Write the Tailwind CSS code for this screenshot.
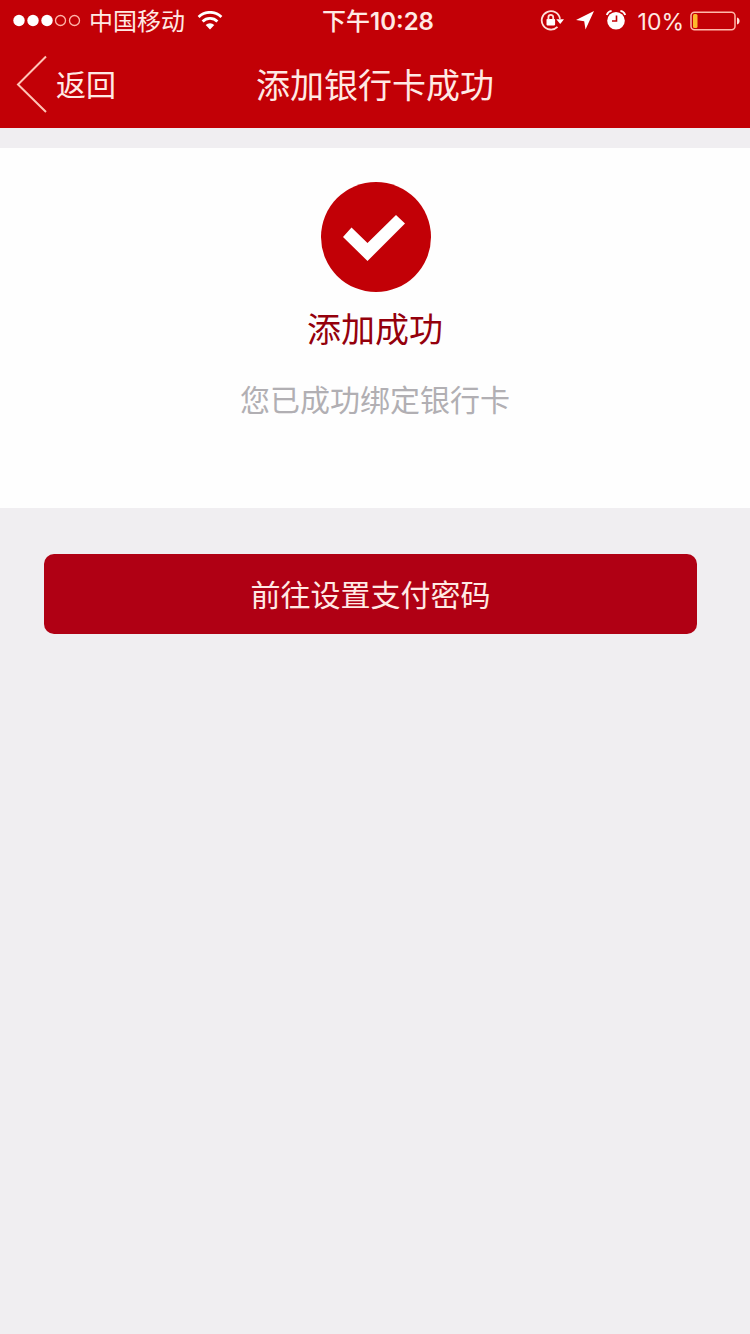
<!DOCTYPE html>
<html lang="zh-CN">
  <head>
    <meta charset="UTF-8" />
    <meta name="viewport" content="width=device-width, initial-scale=1.0" />
    <title>添加银行卡成功</title>
    <script src="https://cdn.jsdelivr.net/npm/@tailwindcss/browser@4"></script>
  </head>
  <body class="min-h-screen bg-[#f0eef1] font-['Inter','Noto_Sans_CJK_SC',sans-serif]">
    <header class="bg-[#c20006] text-[#ffe9e4]">
      <!-- Status bar -->
      <div class="grid h-10 grid-cols-[1fr_auto_1fr] items-center pr-2.5 pl-3 text-2xl leading-10">
        <div class="flex items-center gap-2">
          <svg class="h-4 w-[69px]" viewBox="0 0 69 16" fill="#fff" aria-hidden="true">
            <circle cx="7" cy="7.5" r="5.7" />
            <circle cx="21" cy="7.5" r="5.7" />
            <circle cx="35" cy="7.5" r="5.7" />
            <g fill="none" stroke="#ffb3a8" stroke-width="1.3">
              <circle cx="48.5" cy="7.5" r="5" />
              <circle cx="62.5" cy="7.5" r="5" />
            </g>
          </svg>
          <span class="pt-0.5">中国移动</span>
          <svg class="ml-1 h-5 w-[26px]" viewBox="0 0 26 20" fill="none" stroke="#fff" stroke-width="2.8" aria-hidden="true">
            <path d="M1.600 5.900a16.500 16.500 0 0 1 22.800 0" />
            <path d="M5.600 10.400a10.600 10.600 0 0 1 14.800 0" />
            <path d="M13 18.500l-4.300-4.500a6.200 6.200 0 0 1 8.600 0z" fill="#fff" stroke="none" />
          </svg>
        </div>
        <span class="pt-0.5 pl-1 font-semibold"><span class="font-medium">下午</span>10:28</span>
        <div class="flex items-center justify-end">
          <svg class="mr-3 h-6 w-6" viewBox="0 0 24 24" fill="none" stroke="#ffe0da" stroke-width="1.8" aria-hidden="true">
            <path d="M17.500 17.800A9.200 9.200 0 1 1 20 9.800" />
            <path d="M16.300 10.300h7.700L20.200 15z" fill="#fff" stroke="none" />
            <rect x="6.500" y="10" width="8.600" height="6.400" rx="0.800" fill="#fff" stroke="none" />
            <path d="M8.400 10.500V8.200a2.400 2.400 0 0 1 4.800 0v2.300" />
          </svg>
          <svg class="mr-3 h-5 w-[18px]" viewBox="0 0 18 20" fill="#fff" aria-hidden="true">
            <path d="M18 0L0 9l8.200 1.200L9.500 18.500z" />
          </svg>
          <svg class="mr-3 h-6 w-5" viewBox="0 0 20 24" fill="none" aria-hidden="true">
            <circle cx="10" cy="11.800" r="8.800" fill="#fff" />
            <path d="M.8 6A6 6 0 0 1 5.600 1.900M19.200 6a6 6 0 0 0-4.800-4.100" stroke="#fff" stroke-width="1.800" />
            <path d="M10.500 6.500V12H6" stroke="#c20006" stroke-width="1.600" />
          </svg>
          <span class="mr-1.5 pt-0.5 text-[23px]">10%</span>
          <svg class="h-5 w-[50px]" viewBox="0 0 50 20" fill="none" aria-hidden="true">
            <rect x="1" y="1.200" width="44" height="17.600" rx="3.500" stroke="#ffb9ab" stroke-width="1.500" />
            <rect x="3" y="3" width="4.500" height="14" rx="1.500" fill="#fdb92b" />
            <path d="M47 6.500c3.400.8 3.400 6.200 0 7z" fill="#ffe0da" />
          </svg>
        </div>
      </div>
      <!-- Navigation bar -->
      <nav class="grid h-22 grid-cols-[1fr_auto_1fr] items-center px-4">
        <a href="#" class="flex items-center gap-2 text-3xl">
          <svg class="h-[58px] w-8" viewBox="0 0 32 58" fill="none" stroke="#ffc4b6" stroke-width="2" aria-hidden="true">
            <path d="M30 1.500L2 29.500l28 27.500" />
          </svg>
          <span class="pt-0.5">返回</span>
        </a>
        <h1 class="pt-1 text-[34px] leading-10">添加银行卡成功</h1>
      </nav>
    </header>

    <main class="pt-5">
      <section class="flex h-90 flex-col items-center bg-[#fefefe] pt-8">
        <svg class="h-28 w-28" viewBox="0 0 112 112" aria-hidden="true">
          <circle cx="57" cy="57" r="55" fill="#c20006" />
          <path d="M24 57l8.500-9.500L48.500 63 77 35l9 8.500L48.500 81z" fill="#fff" />
        </svg>
        <h2 class="mt-4 pt-0.5 text-[34px] leading-10 text-[#94000c]">添加成功</h2>
        <p class="mt-8 text-3xl leading-9 text-[#b1afb3]">您已成功绑定银行卡</p>
      </section>
      <div class="pt-[46px] pr-[53px] pl-11">
        <button type="button" class="h-20 w-full rounded-[10px] bg-[#b00014] pt-0.5 text-3xl text-[#ffe9e4]">前往设置支付密码</button>
      </div>
    </main>
  </body>
</html>
